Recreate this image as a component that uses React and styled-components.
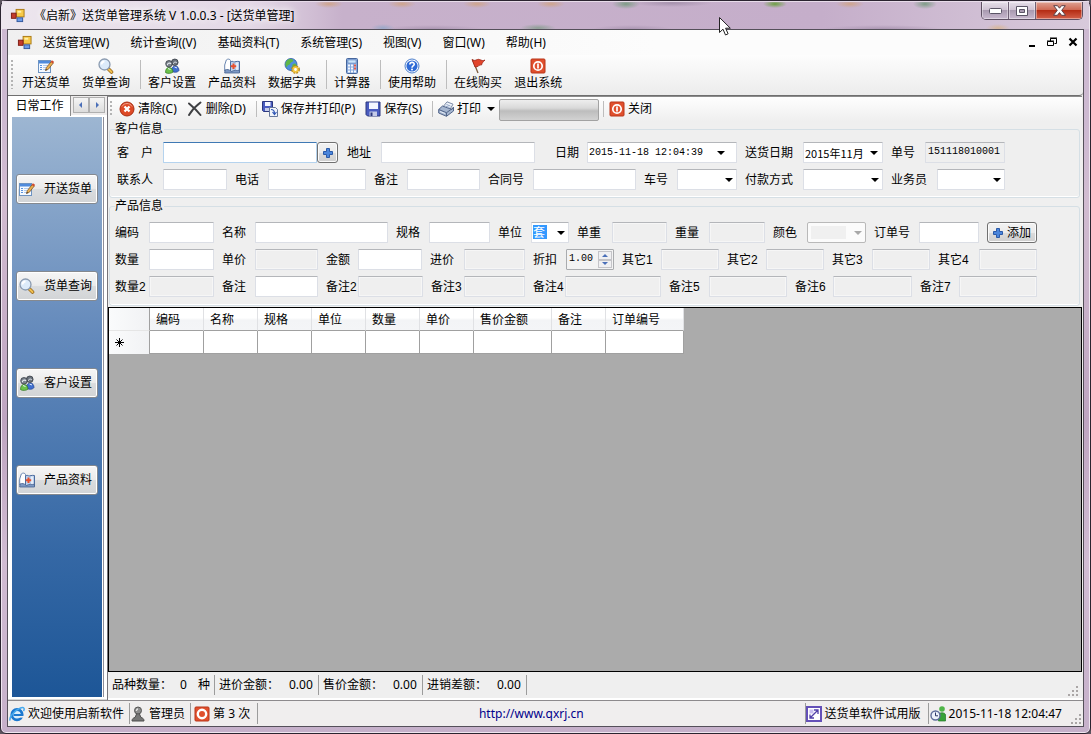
import { useId, useState } from "react";
import styled, { createGlobalStyle, css } from "styled-components";

const UI_FONT = `"Noto Sans", "Noto Sans CJK SC", sans-serif`;
const FORM_FONT = `"Liberation Sans", "Noto Sans CJK SC", sans-serif`;
const MONO_FONT = `"Liberation Mono", "Noto Sans CJK SC", monospace`;

const GlobalStyle = createGlobalStyle`
  * {
    box-sizing: border-box;
  }

  body {
    margin: 0;
    background: #5d5560;
    font-family: ${UI_FONT};
    font-size: 12px;
    line-height: 16px;
    color: #000;
    cursor: default;
  }

  button,
  input,
  select {
    font: inherit;
    color: inherit;
    margin: 0;
    padding: 0;
  }
`;

/* window frame */

const Frame = styled.div`
  display: flex;
  flex-direction: column;
  min-height: 100vh;
  padding: 0 6px 6px;
  border: 1px solid #2b2430;
  border-radius: 7px 7px 6px 6px;
  box-shadow: inset 0 0 0 1px #efe6f0;
  background: linear-gradient(
      180deg,
      transparent 0,
      transparent 120px,
      #d9bfd066 200px,
      #a886a866 420px,
      #d7c0d566 560px,
      #bba3c066 100%
    ),
    #cdb9d1;
`;

const TitleBar = styled.header`
  display: flex;
  align-items: flex-start;
  height: 28px;
  margin: 0 -5px;
  padding: 0 6px 0 8px;
  border-top: 1px solid #e8dcea;
  background: radial-gradient(ellipse 14px 4px at 327px 2px, #cfa58c, transparent),
    radial-gradient(ellipse 14px 4px at 400px 2px, #cfa58c, transparent),
    radial-gradient(ellipse 14px 4px at 475px 2px, #cfa58c, transparent),
    radial-gradient(ellipse 14px 4px at 549px 2px, #cfa58c, transparent),
    radial-gradient(ellipse 14px 5px at 624px 2px, #7e9c86, transparent),
    radial-gradient(ellipse 40px 4px at 670px 1px, #a692ad, transparent),
    radial-gradient(ellipse 12px 4px at 773px 2px, #6ca042, transparent),
    radial-gradient(ellipse 14px 4px at 848px 2px, #cfa58c, transparent),
    radial-gradient(ellipse 12px 5px at 923px 2px, #7e9c86, transparent),
    radial-gradient(ellipse 12px 4px at 381px 26px, #9aa8c8, transparent),
    radial-gradient(ellipse 50px 4px at 430px 27px, #ab96b2, transparent),
    radial-gradient(ellipse 18px 4px at 536px 26px, #8e9f95, transparent),
    radial-gradient(ellipse 40px 4px at 630px 27px, #ab96b2, transparent),
    radial-gradient(ellipse 60px 4px at 880px 27px, #ab96b2, transparent),
    radial-gradient(ellipse 12px 4px at 996px 26px, #d8b79b, transparent),
    linear-gradient(90deg, #ede6ee 0, #e3d8e6 250px, #c7b1cb 340px, #c5aeca 820px, #d8cadb 100%);
`;

const TitleIcon = styled.span`
  display: flex;
  padding: 6px 9px 0 0;
`;

const TitleText = styled.h1`
  flex: 1;
  margin: 0;
  padding-top: 5px;
  font-size: 12px;
  line-height: 18px;
  font-weight: 400;
  text-shadow: 0 0 6px #fff, 0 0 10px #fff;
`;

const CaptionButtons = styled.div`
  display: flex;
  height: 18px;
  border: 1px solid #5e5063;
  border-top: 0;
  border-radius: 0 0 5px 5px;
  overflow: hidden;
`;

const CaptionButton = styled.button`
  display: flex;
  align-items: center;
  justify-content: center;
  width: ${(p) => (p.$close ? 46 : 27)}px;
  border: 0;
  border-right: ${(p) => (p.$close ? "0" : "1px solid #6f6075")};
  box-shadow: inset 0 0 0 1px #ffffff66;
  background: ${(p) =>
    p.$close
      ? "linear-gradient(#dfa294 0, #cf6a55 45%, #b52d15 50%, #d3604a 100%)"
      : "linear-gradient(#e6dfe9 0, #cfc2d3 45%, #a99ab0 50%, #c9b9cf 100%)"};
`;

const Pointer = styled.svg`
  position: absolute;
  left: 718px;
  top: 16px;
  z-index: 2;
  pointer-events: none;
`;

const Client = styled.div`
  flex: 1;
  display: flex;
  flex-direction: column;
  border: 1px solid #55505a;
  background: #f0eeee;
`;

/* menu and tool strips */

const MenuBar = styled.nav`
  display: flex;
  align-items: center;
  gap: 21px;
  height: 25px;
  padding: 0 4px 0 9px;
  background: linear-gradient(90deg, #f0f0f0, #fcfcfc 60%);
`;

const MenuItem = styled.button`
  border: 0;
  background: none;
  white-space: nowrap;

  &:first-of-type {
    margin-left: -10px;
  }
`;

const MdiButtons = styled.div`
  display: flex;
  gap: 8px;
  margin-left: auto;
`;

const MdiButton = styled.button`
  display: flex;
  width: 12px;
  height: 12px;
  border: 0;
  background: none;
`;

const MainTools = styled.div`
  display: flex;
  align-items: stretch;
  height: 41px;
  padding: 0 4px 1px 3px;
  border-bottom: 1px solid #6f6f6f;
  border-bottom-right-radius: 4px;
  background: linear-gradient(#fdfdfd, #ececec);
`;

const Grip = styled.i`
  width: 2px;
  margin: ${(p) => p.$inset}px 3px ${(p) => p.$inset}px 0;
  background: repeating-linear-gradient(#b4b4b4 0 2px, transparent 2px 4px);
`;

const BigTool = styled.button`
  display: flex;
  flex-direction: column;
  align-items: center;
  gap: 1px;
  padding: 3px 6px 0;
  border: 0;
  background: none;
  white-space: nowrap;
`;

const Divider = styled.i`
  width: 1px;
  margin: ${(p) => p.$inset}px 1px ${(p) => p.$inset}px 4px;
  background: #bdbdbd;
`;

const FormTools = styled.div`
  display: flex;
  align-items: stretch;
  height: 24px;
  padding: 0 2px;
  background: linear-gradient(#fefefe, #efefef);
`;

const SmallTool = styled.button`
  display: flex;
  align-items: center;
  gap: 3px;
  padding: 0 ${(p) => (p.$menu ? 0 : 6)}px 0 4px;
  border: 0;
  background: none;
  white-space: nowrap;
`;

const Caret = styled.i`
  margin: 0 4px 0 3px;
  border: 4px solid transparent;
  border-top-color: ${(p) => (p.$muted ? "#a8a8a8" : "#000")};
  border-bottom: 0;
`;

const Progress = styled.div`
  width: 100px;
  height: 22px;
  margin: 2px 0 0;
  border: 1px solid #a2a2a2;
  border-radius: 2px;
  background: linear-gradient(#eee 0, #d9d9d9 40%, #bdbdbd 55%, #d2d2d2 100%);
`;

/* sidebar */

const Body = styled.main`
  flex: 1;
  display: flex;
`;

const Sidebar = styled.aside`
  display: flex;
  flex-direction: column;
  flex: 0 0 99px;
  padding: 0 5px 2px 1px;
  background: #fff;
  border-bottom: 1px solid #d8d8d8;
`;

const TabRow = styled.div`
  display: flex;
  align-items: flex-start;
  height: 20px;
  margin-right: -5px;
  background: #eeecec;
  border-bottom: 1px solid #fff;
`;

const Tab = styled.button`
  width: 62px;
  height: 20px;
  border: 0;
  border-right: 1px solid #8b8b8b;
  background: #fff;
`;

const TabArrow = styled.button`
  display: flex;
  align-items: center;
  justify-content: center;
  width: 16px;
  height: 16px;
  margin-top: 1px;
  border: 1px solid #b0b0b0;
  background: linear-gradient(#f5f5f5, #dcdcdc);

  ${Tab} + & {
    margin-left: 2px;
  }
`;

const SidePanel = styled.div`
  flex: 1;
  display: flex;
  flex-direction: column;
  gap: 67px;
  padding: 57px 4px 0;
  margin: 1px 0 0;
  border-left: 3px solid #fff;
  box-shadow: 1px 0 0 #fff, 2px 0 0 #8d8d98;
  background: linear-gradient(#9db6d2 0, #6389bb 38%, #3568a5 75%, #1d5697 100%);
`;

const SideButton = styled.button`
  display: flex;
  align-items: center;
  justify-content: space-between;
  height: 30px;
  padding: 0 5px 0 2px;
  border: 1px solid #85898f;
  border-radius: 3px;
  box-shadow: inset 0 0 0 1px #fff;
  background: linear-gradient(#f6f6f6 0, #ebebeb 48%, #dadcde 52%, #d2d4d6 100%);
  font-family: ${FORM_FONT};
  white-space: nowrap;
`;

/* order form */

const Content = styled.section`
  flex: 1;
  min-width: 0;
  display: flex;
  flex-direction: column;
  margin-right: 1px;
  border-left: 1px solid #76747a;
  border-top: 1px solid #8c8c8c;
  background: #efefef;
`;

const Group = styled.fieldset`
  display: flex;
  flex-direction: column;
  gap: 6px;
  min-width: 0;
  margin: 0 2px 0 1px;
  padding: ${(p) => p.$top}px 0 ${(p) => p.$bottom}px 5px;
  border: 1px solid #d5dfe5;
  border-radius: 3px;
  box-shadow: inset 0 -1px 0 #fff;
  font-family: ${FORM_FONT};

  legend {
    padding: 0 1px 0 0;
    line-height: 16px;
  }
`;

const Row = styled.div`
  display: flex;
  gap: 8px;
  height: 21px;
  white-space: nowrap;
`;

const Cell = styled.div`
  display: flex;
  flex: none;
  align-items: center;

  label {
    width: ${(p) => p.$label}px;
    padding-left: ${(p) => p.$indent ?? 0}px;
  }
`;

const boxStyle = css`
  width: ${(p) => p.$width}px;
  height: 21px;
  border: 1px solid #dcdfe6;
  border-top-color: #b4b6ba;
  border-radius: 1px;
  background: #fff;
  outline: 0;
`;

const TextBox = styled.input`
  ${boxStyle}
  padding: 0 5px;

  &:disabled {
    background: #efefef;
    box-shadow: inset 0 0 0 1px #f6f6f6;
  }

  &:focus,
  &[data-active] {
    border-color: #b5d3ee;
    border-top-color: #3f79b4;
  }

  &[readonly] {
    background: #efefef;
    padding: 0 0 2px 2px;
    font-family: ${MONO_FONT};
    font-size: 10px;
  }
`;

const PickerBox = styled.div`
  ${boxStyle}
  display: flex;
  align-items: center;

  input {
    flex: 1;
    min-width: 0;
    padding: 0 0 0 1px;
    border: 0;
    outline: 0;
    background: none;
    font-family: ${(p) => (p.$mono ? MONO_FONT : `"Noto Sans CJK SC", sans-serif`)};
    font-size: ${(p) => (p.$mono ? 10 : 11)}px;
  }

  button {
    display: flex;
    padding: 0 ${(p) => (p.$mono ? 7 : 0)}px 0 0;
    border: 0;
    background: none;
  }
`;

const SelectBox = styled.div`
  display: grid;
  align-items: center;

  select,
  ${Caret} {
    grid-area: 1 / 1;
  }

  ${Caret} {
    justify-self: end;
    pointer-events: none;
  }
`;

const Select = styled.select`
  ${boxStyle}
  appearance: none;
  padding-left: 1px;

  ${(p) =>
    p.$marked &&
    css`
      color: #fff;
      background: linear-gradient(#3399ff, #3399ff) 1px 2px / 14px 14px no-repeat #fff;
    `}

  &:disabled {
    opacity: 1;
    border-color: #b9b9b9;
    border-radius: 2px;
    background: linear-gradient(#f0f0f0, #f0f0f0) 3px 3px / 35px 13px no-repeat #fbfbfb;
  }
`;

const NumberBox = styled.div`
  ${boxStyle}
  display: flex;
  border-color: #a9abae;
  background: #f3f3f3;

  input {
    flex: 1;
    min-width: 0;
    padding: 0 0 2px 2px;
    border: 0;
    outline: 0;
    background: none;
    appearance: textfield;
    font-family: ${MONO_FONT};
    font-size: 10px;
  }

  input::-webkit-inner-spin-button {
    appearance: none;
  }
`;

const Spinners = styled.div`
  display: grid;
  grid-template-rows: 1fr 1fr;
  width: 14px;
  margin: 1px;

  button {
    display: flex;
    align-items: center;
    justify-content: center;
    border: 1px solid #c4c4c8;
    background: #f0f0f2;
  }
`;

const PushButton = styled.button`
  display: flex;
  align-items: center;
  justify-content: center;
  gap: 4px;
  flex: none;
  width: ${(p) => p.$width}px;
  height: 21px;
  border: 1px solid #707070;
  border-radius: 3px;
  box-shadow: inset 0 0 0 1px #fbfbfb;
  background: linear-gradient(#f2f2f2 0, #ebebeb 50%, #dcdcdc 52%, #cfcfcf 100%);

  ${Cell} > & {
    margin-right: 1px;
  }
`;

/* item grid */

const GridArea = styled.div`
  flex: 1;
  margin-top: 1px;
  border: 1px solid #000;
  background: #ababab;
`;

const ItemTable = styled.table`
  table-layout: fixed;
  border-collapse: separate;
  border-spacing: 0;
  width: 575px;
  font-family: ${FORM_FONT};

  th,
  td {
    padding: 1px 6px 0;
    text-align: left;
    font-weight: 400;
  }

  thead th {
    height: 23px;
    border-right: 1px solid #e0e1e4;
    border-bottom: 1px solid #a0a0a0;
    background: linear-gradient(#fff 0, #fff 45%, #f3f4f6 55%, #f4f5f7 100%);
  }

  td {
    height: 23px;
    border-right: 1px solid #a0a0a0;
    border-bottom: 1px solid #a0a0a0;
    background: #fff;
  }

  tr > :first-child {
    border-right: 1px solid #a0a0a0;
    border-bottom-color: #e5e5e5;
    background: linear-gradient(90deg, #fafbfc, #f1f2f4);
  }
`;

/* status strips */

const Summary = styled.div`
  display: flex;
  align-items: center;
  height: 28px;
  padding: 0 2px 0 4px;
  border-bottom: 2px solid #fff;
`;

const SummaryItem = styled.div`
  display: flex;
  align-items: center;
  height: 20px;
  width: 100px;
  padding-right: 4px;
  margin-right: 4px;
  border-right: 1px solid #9c9c9c;

  &:first-child {
    width: 103px;
  }
`;

const SummaryLabel = styled.span`
  flex: none;
  width: ${(p) => p.$width}px;
`;

const SummaryUnit = styled.span`
  margin-left: auto;
`;

const StatusBar = styled.footer`
  display: flex;
  align-items: center;
  height: 26px;
  border-top: 1px solid #8d8a8d;
`;

const StatusItem = styled.div`
  display: flex;
  align-items: center;
  gap: 3px;
  height: 21px;
  padding: 0 ${(p) => p.$end ?? 5}px 0 ${(p) => p.$pad ?? 3}px;
  border-right: ${(p) => (p.$last ? "0" : "1px solid #9c9c9c")};
  white-space: nowrap;
`;

const StatusLink = styled.a`
  flex: 1;
  text-align: center;
  color: #00008b;
  text-decoration: none;
`;

const StatusRight = styled.div`
  display: flex;
  border-left: 1px solid #9c9c9c;
`;

const SizeGrip = styled.svg`
  align-self: flex-end;
  margin-left: ${(p) => (p.$push ? "auto" : "0")};
`;

/* icons */

const Icon = ({ size = 16, box = 16, children }) => (
  <svg width={size} height={size} viewBox={`0 0 ${box} ${box}`} aria-hidden="true">
    {children}
  </svg>
);

const AppIcon = () => (
  <Icon size={15}>
    <rect x="6.5" y="1.5" width="8.5" height="8" fill="#f7c948" stroke="#a97812" />
    <rect x="8" y="3" width="4" height="2" fill="#fff0a8" />
    <rect x="1.5" y="5.5" width="5" height="5.5" fill="#c23a2c" stroke="#7c1c14" />
    <rect x="7.5" y="10.5" width="6" height="4" fill="#6c9be8" stroke="#31569b" />
  </Icon>
);

const NoteIcon = () => (
  <Icon>
    <rect x="0.5" y="2.5" width="12" height="12" fill="#f4f9ff" stroke="#6d93c2" />
    <rect x="1" y="3" width="11" height="2.5" fill="#4f8bdc" />
    <path d="M2 7.500h2M2 9.500h2M2 11.500h2" stroke="#5a93dd" />
    <path d="M5 7.500h5M5 9.500h3M5 11.500h3" stroke="#b4cceb" />
    <path d="M7.500 12.500l.8-2.800 5.200-6.500 2 1.600-5.200 6.500z" fill="#e9b04d" stroke="#80562a" strokeWidth=".8" />
    <path d="M12.700 3.900l1.300-1.700 2 1.600-1.300 1.700z" fill="#d34a30" />
    <path d="M7.500 12.500l.5-1.500 1 .9z" fill="#222" />
  </Icon>
);

const SearchIcon = () => (
  <Icon>
    <path d="M10.500 11l3 3" stroke="#9a6a1e" strokeWidth="3.600" strokeLinecap="round" />
    <path d="M11 11.500l2.500 2.500" stroke="#f0c050" strokeWidth="2" strokeLinecap="round" />
    <circle cx="6.500" cy="6.500" r="5.500" fill="#dcebfa" stroke="#8b9bb0" strokeWidth="1.300" />
    <path d="M3.500 6.500a3.200 3.200 0 0 1 3-3" stroke="#fff" strokeWidth="1.800" fill="none" />
  </Icon>
);

const UsersIcon = () => (
  <Icon>
    <path d="M7.500 13c0-4 2-5 4-5s3.500 2 3.500 4.500c-1 2-5.500 2.500-7.500.5z" fill="#3f6fd0" stroke="#213f8a" strokeWidth=".7" />
    <circle cx="10.800" cy="4.300" r="3.300" fill="#6a727c" stroke="#2b3138" strokeWidth=".7" />
    <path d="M9.300 5.800a2 2 0 0 1 3.500-1" stroke="#dfe3e8" fill="none" />
    <path d="M1.500 14.500c0-3.500 1.500-5 3.500-5s4 1.500 4 4.500c-1 1.500-6 2-7.500.5z" fill="#6cc24a" stroke="#2f7420" strokeWidth=".7" />
    <circle cx="5" cy="5.800" r="3.300" fill="#7a828c" stroke="#2b3138" strokeWidth=".7" />
    <path d="M3.200 7.200a2.300 2.300 0 0 1 3.800-1.500" stroke="#e8ecf0" strokeWidth="1.200" fill="none" />
    <path d="M4 10.500l2.500 1M10.500 9l2.500 1" stroke="#eaf5ff" />
  </Icon>
);

const BookIcon = () => (
  <Icon>
    <path d="M.7 13V7L2.300 2C3.500.7 6 .8 6.500 2.500V13" fill="#fff" stroke="#6a86b0" />
    <path d="M6.500 4c2-1.500 3 0 3.500 0s3-1 5.500-.5V14H6.500z" fill="#bcd0ec" stroke="#4c6c9e" />
    <path d="M1 12c2-1 4-.6 6.500 1.500C10 12 13 12 15.500 12.500V15H.7z" fill="#7d98c4" stroke="#46628f" strokeWidth=".8" />
    <path d="M13 4.500v7.500" stroke="#f3f7fd" strokeWidth="1.500" />
    <path d="M9.500 5.500v5.500M6.800 8.200h5.400" stroke="#e8502c" strokeWidth="2" />
  </Icon>
);

const GlobeIcon = () => (
  <Icon>
    <circle cx="7" cy="6.500" r="6" fill="#4f8fdf" stroke="#2a5aa6" strokeWidth=".8" />
    <path d="M3 2.500c2-2 5-1.800 6-.5s-1 2-2 2.500-1 2.500-2.500 2.500-1 3-2 2-2-4 .5-6.500zM9 6c2-1 3-.5 3.500 1s-1.500 4-3 4.500S7.500 8 9 6z" fill="#5fb648" />
    <circle cx="11.500" cy="11.500" r="3" fill="none" stroke="#b48418" strokeWidth="2.800" strokeDasharray="1.600 .8" />
    <circle cx="11.500" cy="11.500" r="2.300" fill="#fff" stroke="#f2c53d" strokeWidth="1.800" />
  </Icon>
);

const CalcIcon = () => (
  <Icon>
    <rect x="2.500" y=".5" width="11" height="15" rx="1" fill="#86a8dc" stroke="#46669c" />
    <rect x="4" y="2" width="8" height="3" fill="#c9e3fb" stroke="#5b7db0" strokeWidth=".5" />
    <path d="M4 7.500h8M4 10.500h8M4 13.500h8" stroke="#f4f8ff" strokeWidth="2" strokeDasharray="2 1" />
    <path d="M10 10.500h2M10 7.500h2" stroke="#e35a48" strokeWidth="2" />
  </Icon>
);

const HelpIcon = () => (
  <Icon>
    <circle cx="8" cy="8" r="7" fill="#fff" stroke="#4c7ecb" />
    <circle cx="8" cy="8" r="5.600" fill="#2f6bd6" />
    <path d="M5.800 6.500C6 3.500 10.300 3.800 10.200 6.300 10 8 8 7.800 8 9.700" stroke="#fff" strokeWidth="1.600" fill="none" />
    <circle cx="8" cy="11.600" r="1" fill="#fff" />
  </Icon>
);

const FlagIcon = () => (
  <Icon>
    <path d="M2.500 1.500l5.500 13.500" stroke="#7c5a3c" strokeWidth="1.300" />
    <path d="M2 1.500c3 2.500 5-1 7.500 0S13 3 15 2c-2 2-3 3-3.500 5-2-1-3.500 2.500-6.500 2z" fill="#e2452c" stroke="#9a2315" strokeWidth=".8" />
  </Icon>
);

const PowerIcon = ({ dot }) => (
  <Icon>
    <rect x="1" y="1" width="14" height="14" rx="1" fill="#e0502e" stroke="#b93518" />
    <circle cx="8" cy="8" r="4.200" fill="none" stroke="#fff" strokeWidth={dot ? 2.4 : 1.7} />
    {!dot && <path d="M8 5.500v5" stroke="#fff" strokeWidth="1.700" />}
  </Icon>
);

const ClearIcon = () => (
  <Icon>
    <circle cx="8" cy="8" r="7" fill="#de4a26" stroke="#a82e12" />
    <path d="M3 5.500c2-4 8-4 10 0" stroke="#f3a088" fill="none" />
    <path d="M5.500 5.500l5 5M10.500 5.500l-5 5" stroke="#fff" strokeWidth="2.400" />
  </Icon>
);

const DeleteIcon = () => (
  <Icon>
    <path d="M2 2.500c3 2.500 8 7 11.500 11.500M13.500 1.500C10 4 5 9 2 14" stroke="#3f4043" strokeWidth="2" strokeLinecap="round" fill="none" />
  </Icon>
);

const SaveIcon = () => (
  <Icon>
    <path d="M1 1h14v14H2.500L1 13.500z" fill="#4a5cc0" stroke="#2c387f" />
    <path d="M4 1.500h9V8H4z" fill="#f3f6ff" />
    <path d="M4.500 10.500H12V15H4.500z" fill="#c5cbe8" />
    <path d="M5.500 11.500h2V15h-2z" fill="#2c387f" />
  </Icon>
);

const SavePrintIcon = () => (
  <Icon>
    <path d="M.5.5h10v10H1.500l-1-1z" fill="#4a5cc0" stroke="#2c387f" />
    <path d="M3 1h5.500v4H3z" fill="#f3f6ff" />
    <path d="M3 7h5v3H3z" fill="#c5cbe8" />
    <path d="M7.500 6.500h6l2 2v7h-8z" fill="#f1f5fb" stroke="#66779a" />
    <path d="M9 8.500c3 0 3.500 1.500 3.500 4M10.500 11l2 2.500 2-2.500" stroke="#3157b5" fill="none" strokeWidth="1.200" />
  </Icon>
);

const PrinterIcon = () => (
  <Icon>
    <path d="M4.500 6.500L9 .8l6 2.400-3.500 6z" fill="#eef3fa" stroke="#7a8aa6" />
    <path d="M.7 8.500L4.500 5l9.500 3.500 1.500-2.500V10l-7 5.300L.7 12z" fill="#a5b6d0" stroke="#53668a" />
    <path d="M.7 8.500l7.800 3.200L15 7M8.500 11.700v3.500" stroke="#53668a" fill="none" />
    <path d="M8.500 3.500l4 1.600M7.500 5l4 1.600" stroke="#8fa3c4" />
    <path d="M2 10.500l5 2" stroke="#e4ebf6" />
  </Icon>
);

const PlusIcon = () => (
  <Icon size={10} box={10}>
    <path d="M3.500.5h3v3h3v3h-3v3h-3v-3h-3v-3h3z" fill="#4b86dc" stroke="#2b5aa8" />
  </Icon>
);

const BrowserIcon = () => (
  <Icon>
    <circle cx="8" cy="8.700" r="5.200" fill="#d9eefc" stroke="#1c78cf" strokeWidth="2.800" />
    <path d="M4.500 8h8v2h-8z" fill="#1c78cf" />
    <path d="M10 10h6v1.600h-6z" fill="#f0eeee" />
    <path d="M1.300 14.500C-.5 12 5 4.500 11.500 2c3.500-1.200 4.500.5 3 3" stroke="#45a9ee" strokeWidth="1.500" fill="none" />
  </Icon>
);

const PersonIcon = () => (
  <Icon>
    <path d="M2 15c0-2 1-3 3-3.500L7 7h2l2 4.500c2 .5 3 1.500 3 3.500z" fill="#777" stroke="#4d4d4d" />
    <circle cx="8" cy="4.500" r="3.500" fill="#8c8c8c" stroke="#555" />
    <path d="M6.500 5a1.700 1.700 0 0 1 1.500-2" stroke="#e2e2e2" strokeWidth="1.300" fill="none" />
  </Icon>
);

const LinkIcon = () => (
  <Icon>
    <rect x="1" y="1" width="14" height="14" fill="#fff" stroke="#6450b8" strokeWidth="2" />
    <path d="M3.500 3.500h4v4h-4z" fill="#c9bff0" />
    <path d="M4 12l8-8M8 4h4v4M4 8.500V12h4" stroke="#5240a8" strokeWidth="1.300" fill="none" />
  </Icon>
);

const OnlineIcon = () => (
  <Icon>
    <circle cx="12" cy="3" r="2.800" fill="#4fb548" />
    <path d="M8.500 15V9c0-3 7-3 7 0v6z" fill="#38a238" stroke="#24782a" strokeWidth=".7" />
    <circle cx="5.500" cy="9.500" r="4.500" fill="#eef2fb" stroke="#5d6c99" strokeWidth="1.400" />
    <path d="M5.500 6.500v3.300H8" stroke="#2b3666" fill="none" />
  </Icon>
);

const MinGlyph = () => (
  <svg width="13" height="6">
    <rect x=".5" y=".5" width="12" height="5" rx="1" fill="#fff" stroke="#5b5566" />
  </svg>
);

const MaxGlyph = () => (
  <svg width="12" height="10">
    <path d="M.5.5h11v9H.5zM3.500 3.500h5v3h-5z" fill="#fff" stroke="#5b5566" fillRule="evenodd" />
  </svg>
);

const CloseGlyph = () => (
  <svg width="13" height="11">
    <path d="M.7.7h3.800l2 2.500 2-2.500h3.800L8.700 5.300l3.800 5H8.600L6.500 7.600l-2.100 2.700H.5l3.800-5z" fill="#fff" stroke="#5b4048" />
  </svg>
);

const Arrow = ({ d }) => (
  <svg width="6" height="6" viewBox="0 0 6 6">
    <path d={d} fill="#4a6fb8" />
  </svg>
);

const GripDots = ({ push }) => (
  <SizeGrip width="12" height="12" $push={push}>
    <path d="M8 1h2M8 5h2M4 5h2M8 9h2M4 9h2M0 9h2" stroke="#aaa6a6" strokeWidth="2" />
  </SizeGrip>
);

/* data */

const MENUS = ["送货管理(W)", "统计查询((V)", "基础资料(T)", "系统管理(S)", "视图(V)", "窗口(W)", "帮助(H)"];

const TOOLS = [
  [
    ["开送货单", NoteIcon],
    ["货单查询", SearchIcon],
  ],
  [
    ["客户设置", UsersIcon],
    ["产品资料", BookIcon],
    ["数据字典", GlobeIcon],
  ],
  [["计算器", CalcIcon]],
  [["使用帮助", HelpIcon]],
  [
    ["在线购买", FlagIcon],
    ["退出系统", PowerIcon],
  ],
];

const SIDE_ITEMS = [
  ["开送货单", NoteIcon],
  ["货单查询", SearchIcon],
  ["客户设置", UsersIcon],
  ["产品资料", BookIcon],
];

const CUSTOMER_ROWS = [
  [
    { label: "客　户", labelWidth: 48, indent: 2, width: 154, add: true, active: true },
    { label: "地址", labelWidth: 34, width: 154 },
    { label: "日期", labelWidth: 44, indent: 12, width: 150, type: "date", value: "2015-11-18 12:04:39", mono: true },
    { label: "送货日期", labelWidth: 58, width: 80, type: "date", value: "2015年11月" },
    { label: "单号", labelWidth: 34, width: 80, readOnly: true, value: "151118010001" },
  ],
  [
    { label: "联系人", labelWidth: 48, indent: 2, width: 64 },
    { label: "电话", labelWidth: 33, width: 98 },
    { label: "备注", labelWidth: 33, width: 73 },
    { label: "合同号", labelWidth: 45, width: 103 },
    { label: "车号", labelWidth: 33, width: 60, type: "select" },
    { label: "付款方式", labelWidth: 58, width: 80, type: "select" },
    { label: "业务员", labelWidth: 46, width: 68, type: "select" },
  ],
];

const PRODUCT_ROWS = [
  [
    { label: "编码", labelWidth: 34, width: 65 },
    { label: "名称", labelWidth: 33, width: 133 },
    { label: "规格", labelWidth: 33, width: 61 },
    { label: "单位", labelWidth: 33, width: 38, type: "select", value: "套", marked: true },
    { label: "单重", labelWidth: 35, width: 55, disabled: true },
    { label: "重量", labelWidth: 34, width: 56, disabled: true },
    { label: "颜色", labelWidth: 34, width: 59, type: "select", disabled: true },
    { label: "订单号", labelWidth: 45, width: 60 },
  ],
  [
    { label: "数量", labelWidth: 34, width: 65 },
    { label: "单价", labelWidth: 33, width: 63, disabled: true },
    { label: "金额", labelWidth: 32, width: 64 },
    { label: "进价", labelWidth: 34, width: 61, disabled: true },
    { label: "折扣", labelWidth: 33, width: 48, type: "number" },
    { label: "其它1", labelWidth: 39, width: 58, disabled: true },
    { label: "其它2", labelWidth: 39, width: 58, disabled: true },
    { label: "其它3", labelWidth: 40, width: 58, disabled: true },
    { label: "其它4", labelWidth: 41, width: 58, disabled: true },
  ],
  [
    { label: "数量2", labelWidth: 34, width: 65, disabled: true },
    { label: "备注", labelWidth: 33, width: 63 },
    { label: "备注2", labelWidth: 32, width: 65, disabled: true },
    { label: "备注3", labelWidth: 33, width: 61, disabled: true },
    { label: "备注4", labelWidth: 32, width: 96, disabled: true },
    { label: "备注5", labelWidth: 40, width: 78, disabled: true },
    { label: "备注6", labelWidth: 38, width: 79, disabled: true },
    { label: "备注7", labelWidth: 39, width: 78, disabled: true },
  ],
];

const COLUMNS = [
  ["编码", 54],
  ["名称", 54],
  ["规格", 54],
  ["单位", 54],
  ["数量", 54],
  ["单价", 54],
  ["售价金额", 78],
  ["备注", 54],
  ["订单编号", 78],
];

const Control = ({ id, field }) => {
  const { type, width, value, disabled, readOnly, mono, marked, active } = field;
  const [amount, setAmount] = useState(1);

  if (type === "date") {
    return (
      <PickerBox $width={width} $mono={mono}>
        <input id={id} type="text" defaultValue={value} />
        <button type="button" aria-label={field.label}>
          <Caret />
        </button>
      </PickerBox>
    );
  }
  if (type === "select") {
    return (
      <SelectBox>
        <Select id={id} $width={width} $marked={marked} disabled={disabled}>
          <option>{value}</option>
        </Select>
        <Caret $muted={disabled} />
      </SelectBox>
    );
  }
  if (type === "number") {
    return (
      <NumberBox $width={width}>
        <input
          id={id}
          type="number"
          step="0.01"
          value={amount.toFixed(2)}
          onChange={(e) => setAmount(Number(e.target.value))}
        />
        <Spinners>
          <button type="button" aria-label="+" onClick={() => setAmount(amount + 1)}>
            <Arrow d="M0 5l3-3 3 3z" />
          </button>
          <button type="button" aria-label="-" onClick={() => setAmount(amount - 1)}>
            <Arrow d="M0 1l3 3 3-3z" />
          </button>
        </Spinners>
      </NumberBox>
    );
  }
  return (
    <TextBox
      id={id}
      type="text"
      $width={width}
      defaultValue={value}
      disabled={disabled}
      readOnly={readOnly}
      data-active={active}
    />
  );
};

const Field = ({ field }) => {
  const id = useId();
  return (
    <Cell $label={field.labelWidth} $indent={field.indent}>
      <label htmlFor={id}>{field.label}</label>
      <Control id={id} field={field} />
      {field.add && (
        <PushButton type="button" $width={21} aria-label="添加客户">
          <PlusIcon />
        </PushButton>
      )}
    </Cell>
  );
};

const Tool = ({ icon: ToolIcon, menu, children }) => (
  <SmallTool type="button" $menu={menu}>
    <ToolIcon />
    {children}
    {menu && <Caret />}
  </SmallTool>
);

export default function App() {
  return (
    <>
      <GlobalStyle />
      <Frame>
        <TitleBar>
          <TitleIcon>
            <AppIcon />
          </TitleIcon>
          <TitleText>《启新》送货单管理系统 V 1.0.0.3 - [送货单管理]</TitleText>
          <CaptionButtons>
            <CaptionButton type="button" aria-label="最小化">
              <MinGlyph />
            </CaptionButton>
            <CaptionButton type="button" aria-label="最大化">
              <MaxGlyph />
            </CaptionButton>
            <CaptionButton type="button" aria-label="关闭" $close>
              <CloseGlyph />
            </CaptionButton>
          </CaptionButtons>
        </TitleBar>
        <Client>
          <MenuBar>
            <AppIcon />
            {MENUS.map((name) => (
              <MenuItem type="button" key={name}>
                {name}
              </MenuItem>
            ))}
            <MdiButtons>
              <MdiButton type="button" aria-label="最小化">
                <svg width="12" height="12">
                  <path d="M2 9h6" stroke="#000" strokeWidth="2" />
                </svg>
              </MdiButton>
              <MdiButton type="button" aria-label="还原">
                <svg width="12" height="12">
                  <path d="M3.500 4V1.500h6v5H7.500M3 1h7M.5 4.500h6v4h-6zM0 4h7" stroke="#000" fill="none" />
                </svg>
              </MdiButton>
              <MdiButton type="button" aria-label="关闭">
                <svg width="12" height="12">
                  <path d="M2.500 1.500l7 7M9.500 1.500l-7 7" stroke="#000" strokeWidth="2.200" />
                </svg>
              </MdiButton>
            </MdiButtons>
          </MenuBar>
          <MainTools>
            <Grip $inset={5} />
            {TOOLS.map((group, index) => [
              index > 0 && <Divider key={index} $inset={5} />,
              ...group.map(([name, ToolIcon]) => (
                <BigTool type="button" key={name}>
                  <ToolIcon />
                  {name}
                </BigTool>
              )),
            ])}
          </MainTools>
          <Body>
            <Sidebar>
              <TabRow>
                <Tab type="button">日常工作</Tab>
                <TabArrow type="button" aria-label="上一页">
                  <Arrow d="M4 0v6L1 3z" />
                </TabArrow>
                <TabArrow type="button" aria-label="下一页">
                  <Arrow d="M2 0v6l3-3z" />
                </TabArrow>
              </TabRow>
              <SidePanel>
                {SIDE_ITEMS.map(([name, SideIcon]) => (
                  <SideButton type="button" key={name}>
                    <SideIcon />
                    {name}
                  </SideButton>
                ))}
              </SidePanel>
            </Sidebar>
            <Content>
              <FormTools>
                <Grip $inset={4} />
                <Tool icon={ClearIcon}>清除(C)</Tool>
                <Tool icon={DeleteIcon}>删除(D)</Tool>
                <Divider $inset={4} />
                <Tool icon={SavePrintIcon}>保存并打印(P)</Tool>
                <Tool icon={SaveIcon}>保存(S)</Tool>
                <Divider $inset={4} />
                <Tool icon={PrinterIcon} menu>
                  打印
                </Tool>
                <Progress role="progressbar" aria-label="打印" />
                <Divider $inset={4} />
                <Tool icon={PowerIcon}>关闭</Tool>
              </FormTools>
              <Group $top={5} $bottom={7}>
                <legend>客户信息</legend>
                {CUSTOMER_ROWS.map((fields, index) => (
                  <Row key={index}>
                    {fields.map((field) => (
                      <Field key={field.label} field={field} />
                    ))}
                  </Row>
                ))}
              </Group>
              <Group $top={8} $bottom={8}>
                <legend>产品信息</legend>
                {PRODUCT_ROWS.map((fields, index) => (
                  <Row key={index}>
                    {fields.map((field) => (
                      <Field key={field.label} field={field} />
                    ))}
                    {index === 0 && (
                      <PushButton type="button" $width={50}>
                        <PlusIcon />
                        添加
                      </PushButton>
                    )}
                  </Row>
                ))}
              </Group>
              <GridArea>
                <ItemTable>
                  <colgroup>
                    <col width="41" />
                    {COLUMNS.map(([name, width]) => (
                      <col key={name} width={width} />
                    ))}
                  </colgroup>
                  <thead>
                    <tr>
                      <th />
                      {COLUMNS.map(([name]) => (
                        <th key={name}>{name}</th>
                      ))}
                    </tr>
                  </thead>
                  <tbody>
                    <tr>
                      <th>
                        <Icon size={9} box={9}>
                          <path d="M4.500 0v9M0 4.500h9M1.500 1.500l6 6M7.500 1.500l-6 6" stroke="#000" />
                        </Icon>
                      </th>
                      {COLUMNS.map(([name]) => (
                        <td key={name} />
                      ))}
                    </tr>
                  </tbody>
                </ItemTable>
              </GridArea>
              <Summary>
                <SummaryItem>
                  <SummaryLabel $width={68}>品种数量：</SummaryLabel>
                  <span>0</span>
                  <SummaryUnit>种</SummaryUnit>
                </SummaryItem>
                <SummaryItem>
                  <SummaryLabel $width={70}>进价金额：</SummaryLabel>
                  <span>0.00</span>
                </SummaryItem>
                <SummaryItem>
                  <SummaryLabel $width={70}>售价金额：</SummaryLabel>
                  <span>0.00</span>
                </SummaryItem>
                <SummaryItem>
                  <SummaryLabel $width={70}>进销差额：</SummaryLabel>
                  <span>0.00</span>
                </SummaryItem>
                <GripDots push />
              </Summary>
            </Content>
          </Body>
          <StatusBar>
            <StatusItem $pad={1}>
              <BrowserIcon />
              欢迎使用启新软件
            </StatusItem>
            <StatusItem $pad={0}>
              <PersonIcon />
              管理员
            </StatusItem>
            <StatusItem $end={7}>
              <PowerIcon dot />第 3 次
            </StatusItem>
            <StatusLink href="http://www.qxrj.cn">http://www.qxrj.cn</StatusLink>
            <StatusRight>
              <StatusItem $pad={0} $end={7}>
                <LinkIcon />
                送货单软件试用版
              </StatusItem>
              <StatusItem $pad={1} $end={9} $last>
                <OnlineIcon />
                2015-11-18 12:04:47
              </StatusItem>
            </StatusRight>
            <GripDots />
          </StatusBar>
        </Client>
      </Frame>
      <Pointer width="13" height="21">
        <path d="M1.500 1.500v15l3.500-3.300 2.500 5.800 2.600-1.200-2.500-5.600h4.700z" fill="#fff" stroke="#222" />
      </Pointer>
    </>
  );
}
